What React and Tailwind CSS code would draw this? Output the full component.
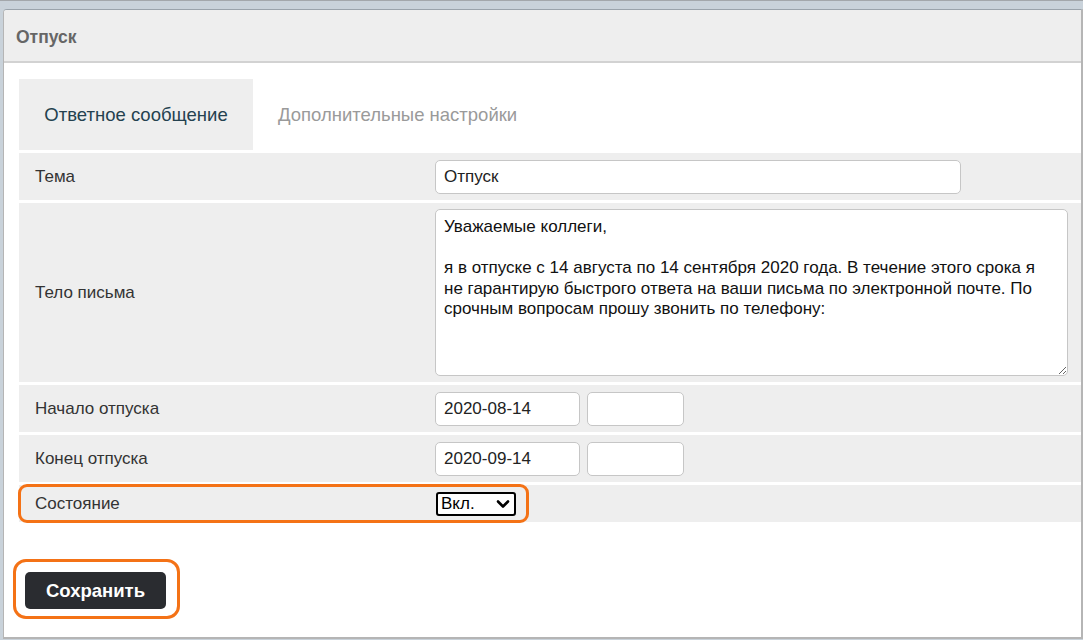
import React from "react";

const font = { fontFamily: '"Liberation Sans", Arial, sans-serif' };

function Row({ h, label, children }) {
  return (
    <div className={`grid grid-cols-[416px_1fr] items-center bg-[#eeeeee] ${h}`}>
      <div className="pl-4 text-[17px] text-[#333333]">{label}</div>
      <div className="flex items-center gap-[7px]">{children}</div>
    </div>
  );
}

function TextInput({ w, value }) {
  return (
    <input
      readOnly
      value={value}
      className={`${w} h-[34px] rounded-[5px] border border-[#c6c6c6] bg-white px-2 text-[17px] text-[#222222] outline-none`}
      style={font}
    />
  );
}

export default function App() {
  const body =
    "Уважаемые коллеги,\n\nя в отпуске с 14 августа по 14 сентября 2020 года. В течение этого срока я\nне гарантирую быстрого ответа на ваши письма по электронной почте. По\nсрочным вопросам прошу звонить по телефону:";
  return (
    <div className="h-[640px] w-[1083px] overflow-hidden border-t border-[#a3a7ab] bg-[#c9d2da] pl-[3px] pt-[8px]" style={font}>
      <div className="flex h-[630px] flex-col overflow-hidden rounded-tl-[4px] border-b-2 border-l border-r-2 border-t border-[#b5b5b5] border-t-[#9aa3ab] bg-white">
        <div className="flex h-[53px] items-center border-b-2 border-[#d2d2d2] bg-[#eeeeee] pl-3 pt-[3px]">
          <span className="text-[17.5px] font-bold text-[#666666]">Отпуск</span>
        </div>
        <div className="flex flex-col pl-[15px] pt-4">
          <div className="flex h-[71px] items-stretch">
            <div className="flex w-[234px] items-center justify-center bg-[#eeeeee] text-[18.5px] text-[#24414f]">
              Ответное сообщение
            </div>
            <div className="flex items-center pl-[25px] text-[18.5px] text-[#9a9a9a]">
              Дополнительные настройки
            </div>
          </div>
          <div className="mt-[3px] flex flex-col gap-[3px]">
            <Row h="h-[47px]" label="Тема">
              <TextInput w="w-[526px]" value="Отпуск" />
            </Row>
            <Row h="h-[179px]" label="Тело письма">
              <textarea
                readOnly
                wrap="off"
                value={body}
                className="h-[167px] w-[633px] overflow-hidden rounded-[5px] border border-[#c6c6c6] bg-white px-2 pt-[7px] text-[17px] leading-[20.5px] text-[#111111] outline-none"
                style={font}
              />
            </Row>
            <Row h="h-[47px]" label="Начало отпуска">
              <TextInput w="w-[145px]" value="2020-08-14" />
              <TextInput w="w-[97px]" value="" />
            </Row>
            <Row h="h-[47px]" label="Конец отпуска">
              <TextInput w="w-[145px]" value="2020-09-14" />
              <TextInput w="w-[97px]" value="" />
            </Row>
            <div className="relative">
              <Row h="h-[37px]" label="Состояние">
                <div className="ml-px flex h-[24px] w-[80px] items-center justify-between rounded-[3px] border-2 border-black bg-white pl-[3px] pr-[4px] text-[17px] text-black">
                  <span>Вкл.</span>
                  <svg width="14" height="10" viewBox="0 0 14 10" fill="none">
                    <path d="M2 2.5 L7 7.5 L12 2.5" stroke="black" strokeWidth="2.6" strokeLinecap="round" strokeLinejoin="round" />
                  </svg>
                </div>
              </Row>
              <div className="pointer-events-none absolute left-[-1px] top-[-1px] h-[39px] w-[511px] rounded-[9px] border-[3px] border-[#f47216]" />
            </div>
          </div>
          <div className="relative mt-[50px] w-fit">
            <button className="ml-[6px] flex h-[37px] w-[141px] items-center justify-center rounded-[5px] bg-[#2a2c30] text-[18.5px] font-bold text-white" style={font}>
              Сохранить
            </button>
            <div className="pointer-events-none absolute left-[-6px] top-[-13px] h-[60px] w-[167px] rounded-[13px] border-[3px] border-[#f47216]" />
          </div>
        </div>
      </div>
    </div>
  );
}
